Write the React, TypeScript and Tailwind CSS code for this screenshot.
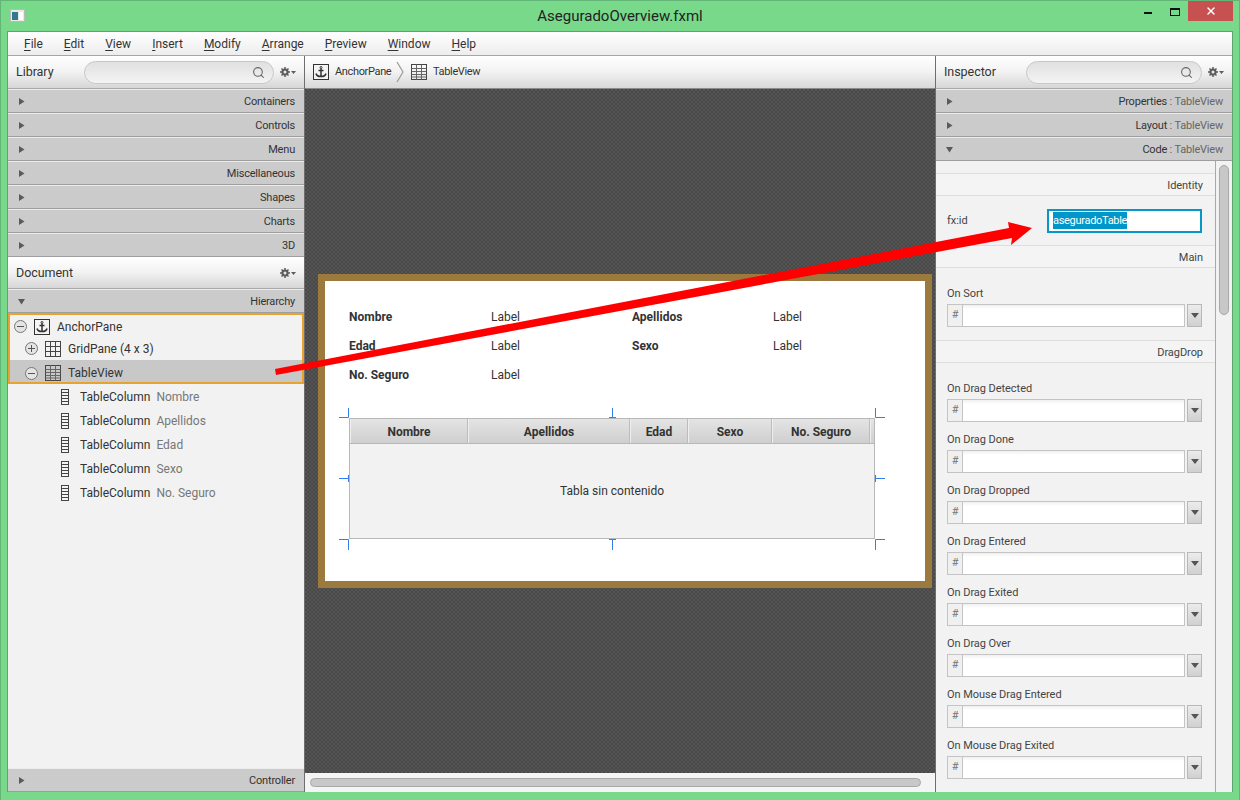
import { Search, X } from "lucide-react";

const MENU = [
  ["F", "ile"],
  ["E", "dit"],
  ["V", "iew"],
  ["I", "nsert"],
  ["M", "odify"],
  ["A", "rrange"],
  ["P", "review"],
  ["W", "indow"],
  ["H", "elp"],
];
const LIBRARY = ["Containers", "Controls", "Menu", "Miscellaneous", "Shapes", "Charts", "3D"];
const COLUMNS = ["Nombre", "Apellidos", "Edad", "Sexo", "No. Seguro"];
const DRAG = [
  "On Drag Detected",
  "On Drag Done",
  "On Drag Dropped",
  "On Drag Entered",
  "On Drag Exited",
  "On Drag Over",
  "On Mouse Drag Entered",
  "On Mouse Drag Exited",
];

function Gear() {
  return (
    <svg width="16" height="10" viewBox="0 0 16 10" className="shrink-0">
      <circle cx="5" cy="5" r="2.600" fill="none" stroke="#5c5c5c" strokeWidth="2" />
      <path d="M5 0v10M0 5h10M1.500 1.500l7 7M8.500 1.500l-7 7" stroke="#5c5c5c" strokeWidth="1.500" />
      <circle cx="5" cy="5" r="1.500" fill="#e8e8e8" />
      <path d="M11 4h5l-2.500 3z" fill="#5c5c5c" />
    </svg>
  );
}

function AnchorIcon() {
  return (
    <svg width="16" height="16" viewBox="0 0 16 16" className="shrink-0">
      <rect x="0.500" y="0.500" width="15" height="15" fill="#f4f4f4" stroke="#333" />
      <circle cx="8" cy="3.500" r="1" fill="none" stroke="#333" />
      <path d="M8 4.500v8M5.500 6.500h5M3 9.500c.5 2.500 3 3 5 3s4.500-.5 5-3" fill="none" stroke="#333" strokeWidth="1.500" />
    </svg>
  );
}

function GridIcon({ table }: { table?: boolean }) {
  return (
    <svg width="16" height="16" viewBox="0 0 16 16" className="shrink-0">
      <rect x="0.500" y="0.500" width="15" height="15" fill="none" stroke="#444" />
      {table ? (
        <path d="M.5 4.500h15M.5 7.500h15M.5 10.500h15M.5 13h15M5.500 .5v15M10.500 .5v15" stroke="#666" fill="none" />
      ) : (
        <path d="M.5 5.500h15M.5 10.500h15M5.500 .5v15M10.500 .5v15" stroke="#444" fill="none" />
      )}
    </svg>
  );
}

function ColumnIcon() {
  return (
    <svg width="10" height="16" viewBox="0 0 10 16" className="shrink-0">
      <rect x="1.500" y="0.500" width="7" height="15" fill="#f4f4f4" stroke="#444" />
      <path d="M1.500 3.500h7M1.500 6.500h7M1.500 9.500h7M1.500 12.500h7" stroke="#444" />
    </svg>
  );
}

function Toggle({ plus }: { plus?: boolean }) {
  return (
    <span className="flex h-[13px] w-[13px] shrink-0 items-center justify-center rounded-full border border-[#777] bg-[#e4e4e4]">
      <svg width="7" height="7" viewBox="0 0 7 7">
        <path d={plus ? "M0 3.500h7M3.500 0v7" : "M0 3.500h7"} stroke="#555" />
      </svg>
    </span>
  );
}

function Caret({ open }: { open?: boolean }) {
  return (
    <svg width="7" height="7" viewBox="0 0 7 7" className="shrink-0">
      <path d={open ? "M0 1h7L3.500 6.500z" : "M1 0l5.500 3.500L1 7z"} fill="#5a5a5a" />
    </svg>
  );
}

function Row({ label, sub, open }: { label: string; sub?: string; open?: boolean }) {
  return (
    <div className="flex h-6 shrink-0 items-center justify-between border-t border-b border-t-[#ececec] border-b-[#9e9e9e] bg-[#cbcbcb] pr-[9px] pl-[10px] text-[#333]">
      <Caret open={open} />
      <span className="pt-[2px] tracking-[-0.2px]">
        {label}
        {sub && <span className="text-[#666]"> : {sub}</span>}
      </span>
    </div>
  );
}

function PanelHeader({ title, searchLeft, short }: { title: string; searchLeft?: string; short?: boolean }) {
  return (
    <div
      className={`flex shrink-0 items-center border-b border-[#a8a8a8] bg-linear-to-b from-white via-[#f2f2f2] to-[#d6d6d6] pr-2 pl-2 text-[12.500px] text-[#333] ${
        short ? "h-[32px]" : "h-[33px]"
      }`}
    >
      <span className={`pt-[1px] ${searchLeft || "flex-1"}`}>{title}</span>
      {searchLeft && (
        <div className="mr-[6px] flex h-[23px] flex-1 items-center justify-end rounded-full border border-[#c8c8c8] bg-linear-to-b from-[#e0e0e0] to-[#f4f4f4] pr-2">
          <Search size={13} className="text-[#666]" />
        </div>
      )}
      <Gear />
    </div>
  );
}

function TreeRow({ name }: { name: string }) {
  return (
    <div className="flex h-6 items-center pl-[52px] text-[#333]">
      <ColumnIcon />
      <span className="ml-[10px]">TableColumn</span>
      <span className="ml-[6px] text-[#777]">{name}</span>
    </div>
  );
}

function SectionHeader({ title }: { title: string }) {
  return (
    <div className="flex h-[23px] items-center justify-end border-t border-b border-[#dedede] bg-[#f4f4f4] pt-[4px] pr-3 text-[#444]">
      {title}
    </div>
  );
}

function EventField({ label }: { label: string }) {
  return (
    <div className="flex h-[51px] flex-col justify-end pr-[13px] pb-[5px] pl-[11px]">
      <div className="mb-[2px] leading-4 text-[#444]">{label}</div>
      <div className="flex h-[23px]">
        <span className="flex w-[15px] items-center justify-center border border-r-0 border-[#c4c4c4] bg-[#f0f0f0] text-[#777]">#</span>
        <div className="h-full w-[223px] border border-[#c4c4c4] bg-linear-to-b from-[#f0f0f0] to-white to-[4px]" />
        <div className="ml-[2px] flex flex-1 items-center justify-center border border-[#b8b8b8] bg-linear-to-b from-[#ececec] to-[#d0d0d0]">
          <svg width="8" height="5" viewBox="0 0 8 5">
            <path d="M0 0h8L4 5z" fill="#555" />
          </svg>
        </div>
      </div>
    </div>
  );
}

function FormLabel({ text, bold }: { text?: string; bold?: boolean }) {
  return <div className={bold ? "font-bold text-[#333]" : "text-[#333]"}>{text}</div>;
}

export default function App() {
  return (
    <div className="relative h-[800px] w-[1240px] overflow-hidden border border-b-0 border-[#62b577] bg-[#78d98b] px-[6px] pb-2 font-['Roboto',sans-serif] text-[11px] tracking-[-0.05px]">
      {/* title bar */}
      <div className="grid h-[30px] grid-cols-[1fr_auto_1fr]">
        <div className="flex items-start pt-2 pl-[3px]">
          <svg width="15" height="13" viewBox="0 0 15 13">
            <rect x="0.500" y="0.500" width="14" height="12" fill="#e8e8e8" stroke="#bbb" />
            <rect x="2" y="3" width="6" height="8" fill="#2f7a8c" />
            <rect x="9" y="3" width="4" height="8" fill="#fff" />
          </svg>
        </div>
        <div className="pt-[5px] text-[15px] leading-5 tracking-normal text-[#222]">AseguradoOverview.fxml</div>
        <div className="flex items-start justify-end">
          <div className="mt-[11px] mr-[18px] h-[2px] w-2 bg-[#111]" />
          <div className="mt-[7px] mr-2 h-[8px] w-[10px] border border-t-2 border-[#111]" />
          <div className="flex h-5 w-[45px] items-center justify-center bg-[#c75050]">
            <X size={12} strokeWidth={3} className="text-white" />
          </div>
        </div>
      </div>

      <div className="relative flex h-[761px] flex-col border border-b-0 border-[#5da56f] bg-[#f2f2f2]">
        {/* menu */}
        <div className="flex h-6 shrink-0 items-center gap-[21px] border-b border-[#a6a6a6] bg-linear-to-b from-white to-[#ededed] pl-4 text-[12px] tracking-normal text-[#333]">
          {MENU.map(([first, rest]) => (
            <span key={rest}>
              <span className="underline underline-offset-2">{first}</span>
              {rest}
            </span>
          ))}
        </div>

        <div className="flex min-h-0 flex-1">
          {/* left column */}
          <div className="flex w-[297px] shrink-0 flex-col border-r border-[#6e6e6e] bg-[#f2f2f2]">
            <PanelHeader title="Library" searchLeft="w-[68px]" />
            {LIBRARY.map((l) => (
              <Row key={l} label={l} />
            ))}
            <PanelHeader title="Document" short />
            <Row label="Hierarchy" open />
            <div className="flex-1 text-[12px] tracking-normal text-[#333]">
              <div className="border-2 border-[#e8a32e]">
                <div className="flex h-[22px] items-center pt-[1px] pl-1">
                  <Toggle />
                  <span className="ml-[7px]"><AnchorIcon /></span>
                  <span className="ml-[7px]">AnchorPane</span>
                </div>
                <div className="flex h-[23px] items-center pl-[15px]">
                  <Toggle plus />
                  <span className="ml-[7px]"><GridIcon /></span>
                  <span className="ml-[7px]">GridPane (4 x 3)</span>
                </div>
                <div className="flex h-[22px] items-center bg-[#c8c8c8] pt-[4px] pl-[15px]">
                  <Toggle />
                  <span className="ml-[7px]"><GridIcon table /></span>
                  <span className="ml-[7px]">TableView</span>
                </div>
              </div>
              <div className="pt-[1px]">
                {COLUMNS.map((c) => (
                  <TreeRow key={c} name={c} />
                ))}
              </div>
            </div>
            <Row label="Controller" />
          </div>

          {/* center column */}
          <div className="flex w-[630px] shrink-0 flex-col">
            <div className="flex h-[33px] shrink-0 items-center border-b border-[#8c8c8c] bg-linear-to-b from-white via-[#f2f2f2] to-[#d8d8d8] pl-2 tracking-[-0.35px] text-[#333]">
              <AnchorIcon />
              <span className="ml-[6px] w-[57px] pt-[1px]">AnchorPane</span>
              <svg width="8" height="22" viewBox="0 0 8 22" className="ml-[4px]">
                <path d="M1 1l6 10-6 10" fill="none" stroke="#999" strokeWidth="1.200" />
              </svg>
              <span className="ml-[7px]"><GridIcon table /></span>
              <span className="ml-[6px] pt-[1px]">TableView</span>
            </div>
            <div className="flex min-h-0 flex-1 flex-col items-start bg-[#4e4e4e] bg-[repeating-conic-gradient(#555555_0_25%,#484848_0_50%)] bg-[length:4px_4px] pt-[185px] pl-[13px]">
              <div className="h-[314px] w-[614px] border-[7px] border-[#9c7a3e] bg-white tracking-normal">
                <div className="grid grid-cols-[142px_141px_141px_auto] grid-rows-[29px_29px_29px] items-center pt-[21px] pl-[24px] text-[12px]">
                  <FormLabel text="Nombre" bold />
                  <FormLabel text="Label" />
                  <FormLabel text="Apellidos" bold />
                  <FormLabel text="Label" />
                  <FormLabel text="Edad" bold />
                  <FormLabel text="Label" />
                  <FormLabel text="Sexo" bold />
                  <FormLabel text="Label" />
                  <FormLabel text="No. Seguro" bold />
                  <FormLabel text="Label" />
                </div>
                <div className="relative mt-[29px] ml-[24px] flex h-[121px] w-[526px] flex-col border border-[#b8b8b8] bg-[#f2f2f2] text-[12px] text-[#333]">
                  <div className="flex h-[25px] shrink-0 border-b border-[#b8b8b8] text-center font-bold">
                    {COLUMNS.map((c, i) => (
                      <div
                        key={c}
                        className="flex items-center justify-center border-r border-l border-r-[#bcbcbc] border-l-[#efefef] bg-linear-to-b from-[#e4e4e4] to-[#cfcfcf] pt-[2px]"
                        style={{ width: [118, 162, 58, 84, 98][i] }}
                      >
                        {c}
                      </div>
                    ))}
                    <div className="flex-1 border-l border-l-[#efefef] bg-linear-to-b from-[#e4e4e4] to-[#cfcfcf]" />
                  </div>
                  <div className="flex flex-1 items-center justify-center">Tabla sin contenido</div>
                  {/* resize handles */}
                  <svg width="548" height="143" viewBox="0 0 548 143" className="pointer-events-none absolute -top-[11px] -left-[11px]">
                    <path
                      d="M0 9.500h9.500V0M270 9.500h7M273.500 9.500V0M536.500 0v9.500H546M0 70.500h9.500M9.500 67v7M536.500 67v7M536.500 70.500H546M0 131.500h9.500V142M270 131.500h7M273.500 131.500V142M536.500 142v-10.500H546"
                      fill="none"
                      stroke="#2f7fee"
                    />
                  </svg>
                </div>
              </div>
            </div>
            <div className="flex h-[19px] shrink-0 items-center bg-[#f4f4f4] px-[5px]">
              <div className="h-[9px] w-[611px] rounded-full border border-[#a8a8a8] bg-[#c8c8c8]" />
            </div>
          </div>

          {/* right column */}
          <div className="flex min-w-0 flex-1 flex-col border-l border-[#6e6e6e] bg-[#f2f2f2]">
            <PanelHeader title="Inspector" searchLeft="w-[82px]" />
            <Row label="Properties" sub="TableView" />
            <Row label="Layout" sub="TableView" />
            <Row label="Code" sub="TableView" open />
            <div className="flex min-h-0 flex-1">
              <div className="min-w-0 flex-1 overflow-hidden border-r border-[#a8a8a8] pt-3">
                <SectionHeader title="Identity" />
                <div className="flex h-[49px] items-center justify-between pr-[13px] pl-[11px] text-[#444]">
                  <span className="pt-[2px]">fx:id</span>
                  <div className="flex h-[24px] w-[155px] items-center border-2 border-[#0796c9] bg-white pl-1 text-[11px] tracking-[-0.3px]">
                    <span className="bg-[#0096c9] leading-[17px] text-white">aseguradoTable</span>
                  </div>
                </div>
                <SectionHeader title="Main" />
                <div className="pt-[13px] pb-[8px]">
                  <EventField label="On Sort" />
                </div>
                <SectionHeader title="DragDrop" />
                <div className="pt-[13px]">
                  {DRAG.map((d) => (
                    <EventField key={d} label={d} />
                  ))}
                </div>
              </div>
              <div className="w-[16px] shrink-0 pt-1 pl-[3px]">
                <div className="h-[150px] w-[10px] rounded-full border border-[#a8a8a8] bg-[#c8c8c8]" />
              </div>
            </div>
          </div>
        </div>
      </div>

      {/* red annotation arrow */}
      <svg width="1240" height="800" viewBox="0 0 1240 800" className="pointer-events-none absolute -top-[1px] -left-[1px]">
        <path d="M275 369L1009 228L1008 222L1032 228L1011 245L1012 238L276 375Z" fill="#ff0000" />
      </svg>
    </div>
  );
}
